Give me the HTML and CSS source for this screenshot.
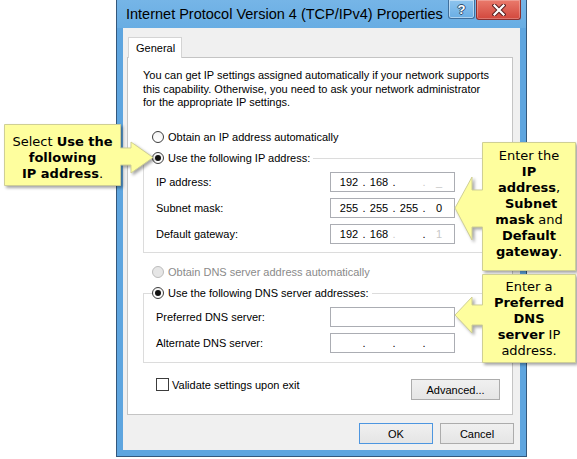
FILE: index.html
```html
<!DOCTYPE html>
<html>
<head>
<meta charset="utf-8">
<link rel="stylesheet" href="styles.css">
</head>
<body>
<div class="window">
  <div class="titlebar">
    <div class="title">Internet Protocol Version 4 (TCP/IPv4) Properties</div>
    <div class="tb-btn help">?</div>
    <div class="tb-btn close">
      <svg width="14" height="12" viewBox="0 0 14 12">
        <path d="M2.5 1.5 L11.5 10.5 M11.5 1.5 L2.5 10.5" stroke="#5a2020" stroke-width="4.2" stroke-linecap="square"/>
        <path d="M2.5 1.5 L11.5 10.5 M11.5 1.5 L2.5 10.5" stroke="#ffffff" stroke-width="2.2" stroke-linecap="square"/>
      </svg>
    </div>
  </div>
  <div class="frame">
    <div class="client">
      <div class="tabs"><div class="tab">General</div></div>
      <div class="panel">
        <p class="desc">You can get IP settings assigned automatically if your network supports<br>this capability. Otherwise, you need to ask your network administrator<br>for the appropriate IP settings.</p>
        <div class="opt opt-first"><span class="radio"></span>Obtain an IP address automatically</div>
        <div class="group g1">
          <div class="opt legend"><span class="radio on"></span>Use the following IP address:</div>
          <div class="field">
            <span class="flabel">IP address:</span>
            <div class="ipbox"><span class="oct">192</span><span class="dot">.</span><span class="oct">168</span><span class="dot">.</span><span class="oct"></span><span class="dot faint">.</span><span class="oct faint">_</span></div>
          </div>
          <div class="field">
            <span class="flabel">Subnet mask:</span>
            <div class="ipbox"><span class="oct">255</span><span class="dot">.</span><span class="oct">255</span><span class="dot">.</span><span class="oct">255</span><span class="dot">.</span><span class="oct">0</span></div>
          </div>
          <div class="field">
            <span class="flabel">Default gateway:</span>
            <div class="ipbox"><span class="oct">192</span><span class="dot">.</span><span class="oct">168</span><span class="dot faint">.</span><span class="oct"></span><span class="dot">.</span><span class="oct faint">1</span></div>
          </div>
        </div>
        <div class="opt dns-auto disabled"><span class="radio"></span>Obtain DNS server address automatically</div>
        <div class="group g2">
          <div class="opt legend"><span class="radio on"></span>Use the following DNS server addresses:</div>
          <div class="field">
            <span class="flabel">Preferred DNS server:</span>
            <div class="ipbox"></div>
          </div>
          <div class="field">
            <span class="flabel">Alternate DNS server:</span>
            <div class="ipbox"><span class="oct"></span><span class="dot">.</span><span class="oct"></span><span class="dot">.</span><span class="oct"></span><span class="dot">.</span><span class="oct"></span></div>
          </div>
        </div>
        <div class="bottomrow">
          <div class="check"><span class="box"></span>Validate settings upon exit</div>
          <div class="btn adv">Advanced...</div>
        </div>
      </div>
      <div class="actions">
        <div class="btn ok">OK</div>
        <div class="btn">Cancel</div>
      </div>
    </div>
  </div>
</div>

<div class="callout c-left">
  <svg class="shape" width="160" height="72" viewBox="0 0 160 72">
    <polygon points="4.5,4.5 120.5,4.5 120.5,28 131,28 131,22 153,37.5 131,53 131,45 120.5,45 120.5,65.5 4.5,65.5"/>
  </svg>
  <div class="ctext"><span>Select </span><b>Use the<br>following<br>IP address</b>.</div>
</div>

<div class="callout c-right1">
  <svg class="shape" width="127" height="138" viewBox="0 0 127 138">
    <polygon points="32.5,4.5 125.5,4.5 125.5,132.5 32.5,132.5 32.5,89 22,89 22,102 5,70 22,39 22,52 32.5,52"/>
  </svg>
  <div class="ctext">Enter the<br><b>IP</b><br><b>address</b>,<br>&nbsp;<b>Subnet</b><br><b>mask</b> and<br><b>Default</b><br><b>gateway</b>.</div>
</div>

<div class="callout c-right2">
  <svg class="shape" width="127" height="98" viewBox="0 0 127 98">
    <polygon points="32.5,4.5 125.5,4.5 125.5,92.5 32.5,92.5 32.5,55 22,55 22,63 5,45 22,27 22,35 32.5,35"/>
  </svg>
  <div class="ctext">Enter a<br><b>Preferred</b><br><b>DNS</b><br><b>server</b> IP<br>address.</div>
</div>
</body>
</html>
```

FILE: styles.css
```css
* { box-sizing: border-box; }

html, body {
  margin: 0;
  padding: 0;
}

body {
  width: 577px;
  height: 459px;
  background: #ffffff;
  position: relative;
  overflow: hidden;
  font-family: "Liberation Sans", Arial, sans-serif;
  font-size: 11px;
  color: #000000;
}

/* ---------- window ---------- */
.window {
  margin-left: 116px;
  width: 411px;
  height: 457px;
  border: 1px solid #34587c;
  border-top: none;
  background: #5ea5df;
  display: flex;
  flex-direction: column;
}

.titlebar {
  height: 28px;
  display: flex;
  align-items: flex-start;
  padding-left: 9px;
  padding-right: 5px;
  background: linear-gradient(#76b5e7, #68ade3);
}

.title {
  flex: 1;
  font-size: 14.5px;
  line-height: 28px;
  color: #000;
  white-space: nowrap;
}

.tb-btn {
  display: flex;
  align-items: center;
  justify-content: center;
  border-radius: 0 0 3px 3px;
}

.help {
  width: 27px;
  height: 19px;
  margin-right: 1px;
  background: linear-gradient(#8ec4ee, #6aaee4);
  border: 1px solid #3f6f9c;
  border-top: none;
  box-shadow: inset 0 0 0 1px rgba(255, 255, 255, 0.45);
  color: #ffffff;
  font-weight: bold;
  font-size: 13px;
  text-shadow: 1px 0 0 #2d4f70, -1px 0 0 #2d4f70, 0 1px 0 #2d4f70, 0 -1px 0 #2d4f70;
}

.close {
  width: 45px;
  height: 20px;
  background: linear-gradient(#ea7a6c, #d2483d);
  border: 1px solid #8b3030;
  border-top: none;
  box-shadow: inset 0 0 0 1px rgba(255, 255, 255, 0.25);
}

.frame {
  flex: 1;
  padding: 0 6px 6px 6px;
}

.client {
  height: 422px;
  background: #f0f0f0;
  display: flex;
  flex-direction: column;
}

/* ---------- tab ---------- */
.tabs {
  display: flex;
  margin-top: 9px;
  padding-left: 5px;
}

.tab {
  width: 54px;
  height: 21px;
  margin-bottom: -1px;
  position: relative;
  z-index: 1;
  background: #ffffff;
  border: 1px solid #d4d4d4;
  border-bottom: none;
  padding: 3px 0 0 7px;
  line-height: 14px;
}

.panel {
  margin-left: 4px;
  width: 386px;
  height: 358px;
  border: 1px solid #c4c4c4;
  background: #ffffff;
  display: flex;
  flex-direction: column;
  padding: 0 8px 0 15px;
}

.desc {
  margin: 11px 0 0 0;
  line-height: 13.5px;
  white-space: nowrap;
}

/* ---------- radios ---------- */
.opt {
  display: flex;
  align-items: center;
  height: 16px;
  white-space: nowrap;
}

.radio {
  width: 12px;
  height: 12px;
  border-radius: 50%;
  border: 1px solid #3c3c3c;
  background: linear-gradient(#f4f4f4, #ffffff);
  margin-right: 4px;
  display: flex;
  align-items: center;
  justify-content: center;
  flex: none;
}

.radio.on::after {
  content: "";
  width: 6px;
  height: 6px;
  border-radius: 50%;
  background: #111111;
}

.opt-first {
  margin-top: 19.5px;
  margin-left: 9px;
}

.disabled {
  color: #8a8a8a;
}

.disabled .radio {
  border-color: #bcbcbc;
  background: #e6e6e6;
}

.dns-auto {
  margin-top: 11px;
  margin-left: 9px;
}

/* ---------- group boxes ---------- */
.group {
  width: 360px;
  border: 1px solid #dcdcdc;
  display: flex;
  flex-direction: column;
  padding: 0 0 8px 12px;
}

.g1 { margin-top: 13px; }
.g2 { margin-top: 13px; padding-bottom: 9px; }

.legend {
  align-self: flex-start;
  margin-top: -9px;
  margin-left: -4px;
  padding-right: 3px;
  background: #ffffff;
}

.field {
  display: flex;
  align-items: center;
  height: 20px;
  margin-top: 6px;
}

.flabel {
  width: 174px;
  white-space: nowrap;
}

.ipbox {
  width: 125px;
  height: 20px;
  border: 1px solid #abadb3;
  background: #ffffff;
  display: flex;
  align-items: center;
  padding-left: 6px;
}

.oct {
  width: 24px;
  text-align: center;
}

.dot {
  width: 6px;
  text-align: center;
}

.faint {
  color: #c8c8c8;
}

/* ---------- bottom row ---------- */
.bottomrow {
  display: flex;
  align-items: flex-start;
  margin-top: 15px;
}

.check {
  display: flex;
  align-items: center;
  height: 13px;
  margin-left: 13px;
  white-space: nowrap;
}

.box {
  width: 13px;
  height: 13px;
  border: 1px solid #3c3c3c;
  background: #ffffff;
  margin-right: 3px;
}

.btn {
  width: 74px;
  height: 21px;
  border: 1px solid #acacac;
  background: linear-gradient(#f0f0f0, #e5e5e5);
  display: flex;
  align-items: center;
  justify-content: center;
}

.adv {
  width: 89px;
  margin-left: auto;
  margin-right: 4px;
  margin-top: 1px;
}

.actions {
  display: flex;
  justify-content: flex-end;
  gap: 7px;
  margin-top: 8px;
  padding-right: 6px;
}

.ok {
  border-color: #4d96e0;
}

/* ---------- callouts ---------- */
.callout {
  position: absolute;
  z-index: 5;
  font-family: "DejaVu Sans", Verdana, sans-serif;
  font-size: 13px;
  line-height: 16px;
  color: #000000;
}

.callout .shape {
  position: absolute;
  left: 0;
  top: 0;
  filter: drop-shadow(2px 2px 1.5px rgba(0, 0, 0, 0.35));
}

.callout polygon {
  fill: #fefe9e;
  stroke: #cfcf95;
  stroke-width: 1;
}

.ctext {
  position: relative;
  text-align: center;
  white-space: nowrap;
}

.c-left {
  left: 0;
  top: 120px;
  width: 160px;
  height: 72px;
}

.c-left .ctext {
  margin-left: 4px;
  width: 117px;
  padding-top: 14px;
}

.c-right1 {
  left: 450px;
  top: 138px;
  width: 127px;
  height: 138px;
}

.c-right1 .ctext {
  margin-left: 32px;
  width: 94px;
  padding-top: 10px;
}

.c-right2 {
  left: 450px;
  top: 270px;
  width: 127px;
  height: 98px;
}

.c-right2 .ctext {
  margin-left: 32px;
  width: 94px;
  padding-top: 9px;
}
```
